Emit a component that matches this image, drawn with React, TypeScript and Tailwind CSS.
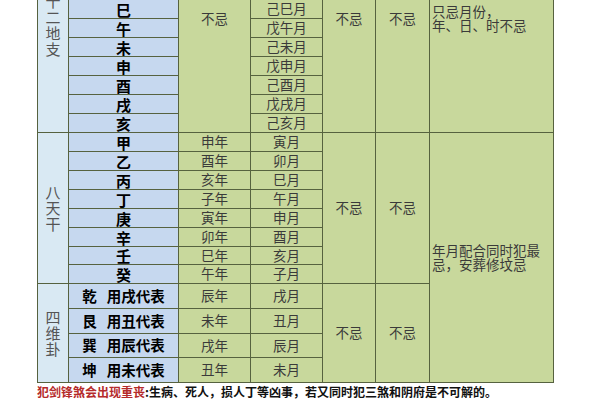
import { Fragment } from "react";

const branches = ["子", "丑", "寅", "卯", "辰", "巳", "午", "未", "申", "酉", "戌", "亥"];
const branchMonths = ["戊子月", "己丑月", "戊寅月", "己卯月", "戊辰月", "己巳月", "戊午月", "己未月", "戊申月", "己酉月", "戊戌月", "己亥月"];

const stems = [
  { stem: "甲", year: "申年", month: "寅月" },
  { stem: "乙", year: "酉年", month: "卯月" },
  { stem: "丙", year: "亥年", month: "巳月" },
  { stem: "丁", year: "子年", month: "午月" },
  { stem: "庚", year: "寅年", month: "申月" },
  { stem: "辛", year: "卯年", month: "酉月" },
  { stem: "壬", year: "巳年", month: "亥月" },
  { stem: "癸", year: "午年", month: "子月" },
];

const trigrams = [
  { gua: "乾", use: "用戌代表", year: "辰年", month: "戌月" },
  { gua: "艮", use: "用丑代表", year: "未年", month: "丑月" },
  { gua: "巽", use: "用辰代表", year: "戌年", month: "辰月" },
  { gua: "坤", use: "用未代表", year: "丑年", month: "未月" },
];

function VLabel({ text, className = "" }: { text: string; className?: string }) {
  return (
    <div className={`flex flex-col items-center justify-center bg-[#d9e9f3] text-[15px] leading-[16px] text-[#555] ${className}`}>
      {text.split("").map((c, i) => (
        <span key={i}>{c}</span>
      ))}
    </div>
  );
}

function Blue({ children }: { children: React.ReactNode }) {
  return (
    <div className="flex items-center justify-center bg-[#c6d8ef] text-[15px] font-bold leading-none text-black">
      {children}
    </div>
  );
}

function Green({ children, className = "" }: { children?: React.ReactNode; className?: string }) {
  return (
    <div className={`flex items-center justify-center bg-[#c8d89c] text-[13.5px] leading-none text-[#3a3a3a] ${className}`}>
      {children}
    </div>
  );
}

export default function App() {
  return (
    <div className="h-[400px] w-[600px] overflow-hidden bg-white font-['Noto_Sans_CJK_SC',sans-serif]">
      <div className="-mt-[96px] ml-[37px] grid w-[517px] grid-cols-[30px_109px_71px_71px_52px_53px_123px] grid-rows-[repeat(18,18px)_17px_18px_24px_24px_23px_24px] gap-px border border-[#56623f] bg-[#56623f]">
        {/* 十二地支 */}
        {branches.map((b, i) => (
          <Fragment key={b}>
            {i === 0 && <VLabel text="十二地支" className="row-span-12 pt-[12px]" />}
            <Blue>{b}</Blue>
            {i === 0 && <Green className="row-span-12">不忌</Green>}
            <Green>{branchMonths[i]}</Green>
            {i === 0 && (
              <>
                <Green className="row-span-12">不忌</Green>
                <Green className="row-span-12">不忌</Green>
                <Green className="row-span-12 justify-start pl-[2px] text-left leading-[15px]">
                  <div>
                    只忌月份，
                    <br />
                    年、日、时不忌
                  </div>
                </Green>
              </>
            )}
          </Fragment>
        ))}

        {/* 八天干 */}
        {stems.map((s, i) => (
          <Fragment key={s.stem}>
            {i === 0 && <VLabel text="八天干" className="row-span-8" />}
            <Blue>{s.stem}</Blue>
            <Green>{s.year}</Green>
            <Green>{s.month}</Green>
            {i === 0 && (
              <>
                <Green className="row-span-8">不忌</Green>
                <Green className="row-span-8">不忌</Green>
                <Green className="row-span-12 justify-start pl-[2px] text-left leading-[15px]">
                  <div>
                    年月配合同时犯最
                    <br />
                    忌，安葬修坟忌
                  </div>
                </Green>
              </>
            )}
          </Fragment>
        ))}

        {/* 四维卦 */}
        {trigrams.map((t, i) => (
          <Fragment key={t.gua}>
            {i === 0 && <VLabel text="四维卦" className="row-span-4" />}
            <div className="flex items-center justify-center bg-[#c6d8ef] text-[14.5px] font-bold leading-none text-black">
              <span>{t.gua}</span>
              <span className="ml-[10px]">{t.use}</span>
            </div>
            <Green>{t.year}</Green>
            <Green>{t.month}</Green>
            {i === 0 && (
              <>
                <Green className="row-span-4">不忌</Green>
                <Green className="row-span-4">不忌</Green>
              </>
            )}
          </Fragment>
        ))}
      </div>

      <p className="ml-[37px] mt-[1px] whitespace-nowrap text-[12px] font-bold leading-[16px] text-[#111]">
        <span className="text-[#b52a2a]">犯剑锋煞会出现重丧</span>:生病、死人，损人丁等凶事，若又同时犯三煞和阴府是不可解的。
      </p>
    </div>
  );
}
